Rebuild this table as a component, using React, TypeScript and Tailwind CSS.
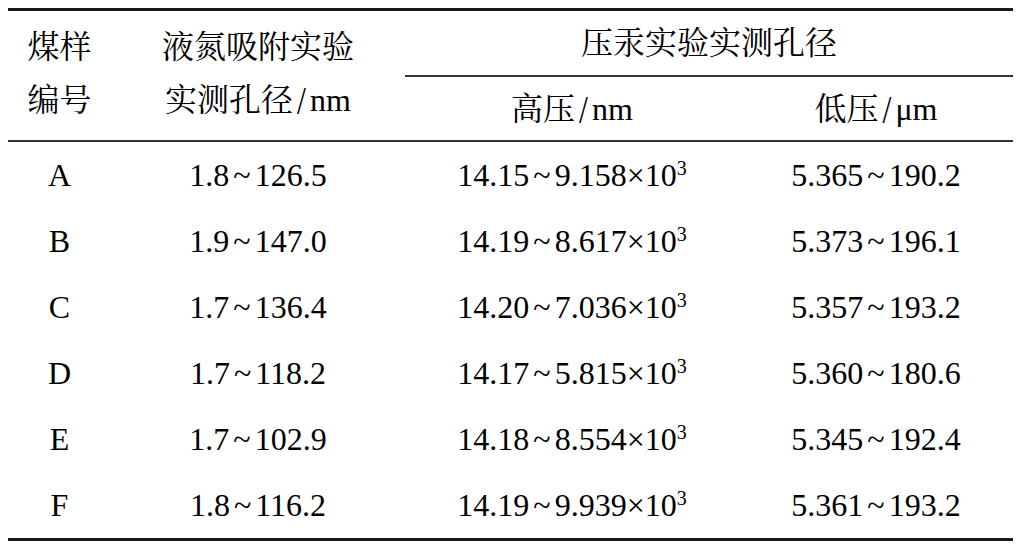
const rows = [
  { id: 'A', n2: ['1.8', '126.5'], hp: ['14.15', '9.158'], lp: ['5.365', '190.2'] },
  { id: 'B', n2: ['1.9', '147.0'], hp: ['14.19', '8.617'], lp: ['5.373', '196.1'] },
  { id: 'C', n2: ['1.7', '136.4'], hp: ['14.20', '7.036'], lp: ['5.357', '193.2'] },
  { id: 'D', n2: ['1.7', '118.2'], hp: ['14.17', '5.815'], lp: ['5.360', '180.6'] },
  { id: 'E', n2: ['1.7', '102.9'], hp: ['14.18', '8.554'], lp: ['5.345', '192.4'] },
  { id: 'F', n2: ['1.8', '116.2'], hp: ['14.19', '9.939'], lp: ['5.361', '193.2'] },
]

const font = { fontFamily: '"Liberation Serif", "Noto Serif CJK SC", "Noto Sans CJK SC", serif' }

function Range({ a, b, exp }: { a: string; b: string; exp?: boolean }) {
  return (
    <span className="whitespace-nowrap">
      {a}
      <span className="mx-[4px]">~</span>
      {b}
      {exp && (
        <>
          ×10<sup className="text-[20px] -top-[11px]">3</sup>
        </>
      )}
    </span>
  )
}

function Unit({ cn, unit }: { cn: string; unit: string }) {
  return (
    <span className="whitespace-nowrap">
      {cn}
      <span className="inline-block mx-[4px] scale-y-125">/</span>
      {unit}
    </span>
  )
}

export default function App() {
  const cols = 'grid grid-cols-[103px_294px_334px_274px]'
  return (
    <div className="w-[1024px] h-[544px] bg-white pt-[8px] pl-[8px] text-black text-[32px]" style={font}>
      <div className="w-[1005px]">
        <div className="h-[3px] bg-[#1a1a1a]" />
        {/* header */}
        <div className={`${cols} h-[129px]`}>
          <div className="flex flex-col items-center justify-center leading-[53px] pb-[4px]">
            <span>煤样</span>
            <span>编号</span>
          </div>
          <div className="flex flex-col items-center justify-center leading-[53px] pb-[4px]">
            <span>液氮吸附实验</span>
            <Unit cn="实测孔径" unit="nm" />
          </div>
          <div className="col-span-2 flex flex-col">
            <div className="h-[64px] flex items-center justify-center">压汞实验实测孔径</div>
            <div className="h-[2px] bg-[#333]" />
            <div className="grid grid-cols-[334px_274px] h-[63px]">
              <div className="flex items-center justify-center"><Unit cn="高压" unit="nm" /></div>
              <div className="flex items-center justify-center"><Unit cn="低压" unit="μm" /></div>
            </div>
          </div>
        </div>
        <div className="h-[2px] bg-[#333]" />
        {/* body */}
        {rows.map(r => (
          <div key={r.id} className={`${cols} h-[66px] items-center text-center`}>
            <div>{r.id}</div>
            <div><Range a={r.n2[0]} b={r.n2[1]} /></div>
            <div><Range a={r.hp[0]} b={r.hp[1]} exp /></div>
            <div><Range a={r.lp[0]} b={r.lp[1]} /></div>
          </div>
        ))}
        <div className="h-[3px] bg-[#1a1a1a]" />
      </div>
    </div>
  )
}
